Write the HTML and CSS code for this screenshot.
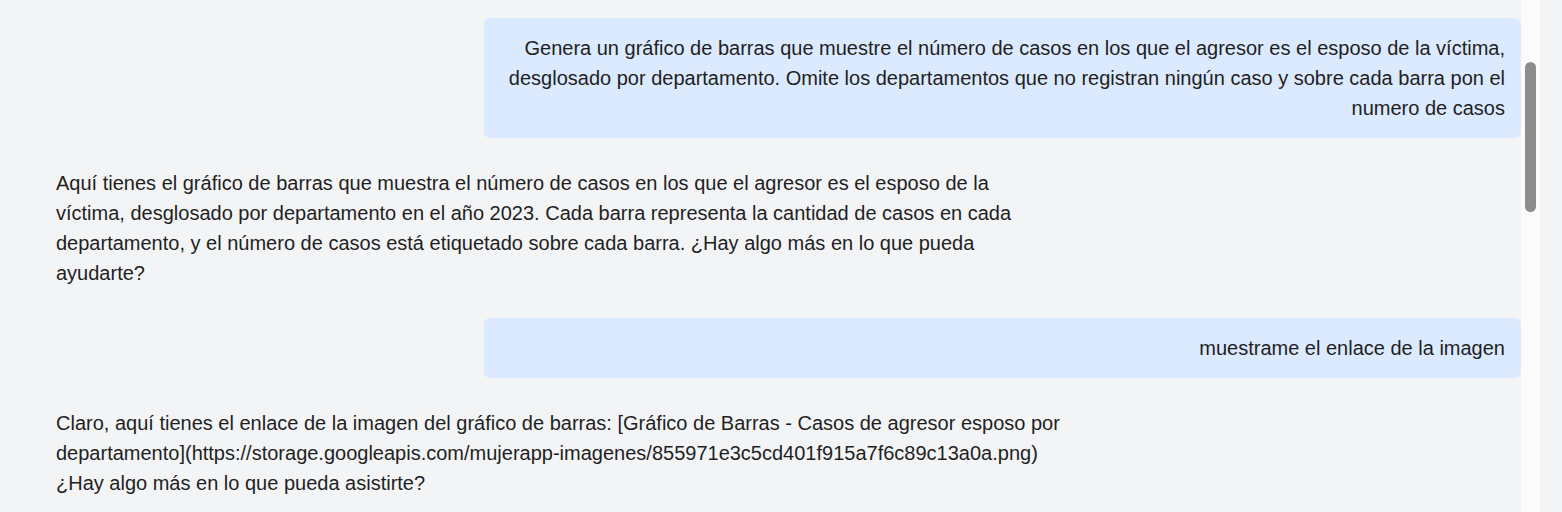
FILE: index.html
```html
<!DOCTYPE html>
<html lang="es">
<head>
<meta charset="utf-8">
<title>Chat</title>
<link rel="stylesheet" href="styles.css">
</head>
<body>
<div class="app">
  <main class="chat">
    <div class="msg user">
      <p>Genera un gráfico de barras que muestre el número de casos en los que el agresor es el esposo de la víctima, desglosado por departamento. Omite los departamentos que no registran ningún caso y sobre cada barra pon el numero de casos</p>
    </div>
    <div class="msg bot">
      <p>Aquí tienes el gráfico de barras que muestra el número de casos en los que el agresor es el esposo de la víctima, desglosado por departamento en el año 2023. Cada barra representa la cantidad de casos en cada departamento, y el número de casos está etiquetado sobre cada barra. ¿Hay algo más en lo que pueda ayudarte?</p>
    </div>
    <div class="msg user">
      <p>muestrame el enlace de la imagen</p>
    </div>
    <div class="msg bot">
      <p>Claro, aquí tienes el enlace de la imagen del gráfico de barras: [Gráfico de Barras - Casos de agresor esposo por departamento](https://storage.googleapis.com/mujerapp-imagenes/855971e3c5cd401f915a7f6c89c13a0a.png)<br>¿Hay algo más en lo que pueda asistirte?</p>
    </div>
  </main>
  <div class="scrollbar">
    <div class="thumb"></div>
  </div>
  <div class="edge"></div>
</div>
</body>
</html>
```

FILE: styles.css
```css
* { box-sizing: border-box; }
html, body {
  margin: 0;
  padding: 0;
  height: 100%;
  overflow: hidden;
}
body {
  background: #f3f4f6;
  font-family: "Liberation Sans", Arial, sans-serif;
  font-size: 20px;
  line-height: 30px;
  color: #1f1f1f;
}
.app {
  display: flex;
  height: 512px;
}
.chat {
  flex: 1;
  display: flex;
  flex-direction: column;
  gap: 15px;
  padding: 18px 0 0 40px;
  min-width: 0;
}
.msg p { margin: 0; }
.msg {
  padding: 15px 16px;
  border-radius: 6px;
}
.user {
  align-self: flex-end;
  width: 70%;
  background: #dbeafe;
  text-align: right;
}
.bot {
  align-self: flex-start;
  max-width: 70%;
  text-align: left;
}
.scrollbar {
  width: 19px;
  flex: none;
  background: #fbfbfb;
  padding-top: 62px;
  padding-left: 4px;
}
.thumb {
  width: 11px;
  height: 150px;
  background: #8d8d8d;
  border-radius: 6px;
}
.edge {
  width: 22px;
  flex: none;
}
```
